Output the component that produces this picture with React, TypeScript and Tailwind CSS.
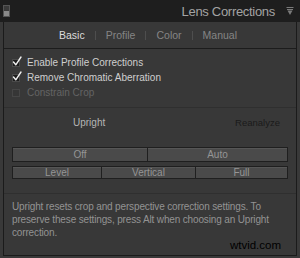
import React from "react";

function Check({ checked, disabled }: { checked?: boolean; disabled?: boolean }) {
  return (
    <div className="relative w-[8px] h-[8px] shrink-0">
      <div
        className={
          disabled
            ? "w-[8px] h-[8px] border border-[#464646] bg-[#363636]"
            : "w-[8px] h-[8px] border border-[#4a4a4a] bg-[#1c1c1c]"
        }
      />
      {checked && (
        <svg className="absolute left-[0px] top-[-3px]" width="10" height="10" viewBox="0 0 10 10">
          <path d="M1.5 6 L3.8 8.8 L9 1" fill="none" stroke="#f0f0f0" strokeWidth="1.4" strokeLinecap="round" strokeLinejoin="round" />
        </svg>
      )}
    </div>
  );
}

function Btn({ label, className }: { label: string; className?: string }) {
  return (
    <div
      className={
        "flex items-center justify-center border border-[#1f1f1f] bg-[#4a4a4a] text-[#959595] text-[10px] leading-none shadow-[inset_0_1px_0_#565656] " +
        (className ?? "")
      }
    >
      {label}
    </div>
  );
}

export default function App() {
  return (
    <div className="w-[300px] h-[258px] bg-[#393939] flex flex-col font-['Liberation_Sans',Arial,sans-serif] overflow-hidden">
      {/* Header */}
      <div className="h-[22px] bg-[#1e1e1e] flex items-center pl-[3px] pr-[6px] shrink-0">
        <div className="w-[7px] h-[12px] border border-[#555555] flex flex-col">
          <div className="flex-1 bg-[#3a3a3a]" />
          <div className="flex-1 bg-[#8a8a8a]" />
        </div>
        <div className="flex-1" />
        <span className="text-[13px] text-[#a3a3a3] tracking-[-0.3px] leading-none">Lens Corrections</span>
        <svg className="ml-[11px]" width="8" height="10" viewBox="0 0 8 10">
          <path d="M0.5 1.5 L7.5 1.5" stroke="#7a7a7a" strokeWidth="1" />
          <path d="M1 3.5 L7 3.5" stroke="#7a7a7a" strokeWidth="1" />
          <path d="M1.5 4.5 L4 9 L6.5 4.5 Z" fill="#7a7a7a" />
        </svg>
      </div>

      {/* Panel */}
      <div className="h-[234px] mx-[3px] border-x border-b border-[#1b1b1b] bg-[#383838] flex flex-col shrink-0">
        {/* Tabs */}
        <div className="h-[27px] border-b border-[#1c1c1c] flex items-center justify-center pr-[4px] text-[10.5px] leading-none">
          <span className="text-[#dcdcdc]">Basic</span>
          <span className="w-px h-[9px] bg-[#4e4e4e] mx-[10px]" />
          <span className="text-[#858585]">Profile</span>
          <span className="w-px h-[9px] bg-[#4e4e4e] mx-[10px]" />
          <span className="text-[#858585]">Color</span>
          <span className="w-px h-[9px] bg-[#4e4e4e] mx-[10px]" />
          <span className="text-[#858585]">Manual</span>
        </div>

        {/* Checkboxes */}
        <div className="h-[59px] border-b border-[#2f2f2f] pt-[6px] pl-[8px] flex flex-col">
          <div className="h-[15px] flex items-center gap-[7px]">
            <Check checked />
            <span className="text-[10px] text-[#cfcfcf] leading-none">Enable Profile Corrections</span>
          </div>
          <div className="h-[15px] flex items-center gap-[7px]">
            <Check checked />
            <span className="text-[10px] text-[#cfcfcf] leading-none">Remove Chromatic Aberration</span>
          </div>
          <div className="h-[15px] flex items-center gap-[7px]">
            <Check disabled />
            <span className="text-[10px] text-[#646464] leading-none">Constrain Crop</span>
          </div>
        </div>

        {/* Upright */}
        <div className="h-[86px] border-b border-[#2f2f2f] px-[8px] pt-[8px] flex flex-col">
          <div className="h-[14px] flex items-center">
            <span className="ml-[61px] text-[10px] text-[#b5b5b5] leading-none">Upright</span>
            <div className="flex-1" />
            <span className="mr-[8px] text-[9.5px] text-[#1a1a1a] leading-none">Reanalyze</span>
          </div>
          <div className="h-[17px]" />
          <div className="flex h-[15px]">
            <Btn label="Off" className="w-[136px]" />
            <Btn label="Auto" className="flex-1 border-l-0" />
          </div>
          <div className="h-[4px]" />
          <div className="flex h-[13px]">
            <Btn label="Level" className="w-[90px]" />
            <Btn label="Vertical" className="w-[94px] border-l-0" />
            <Btn label="Full" className="flex-1 border-l-0" />
          </div>
        </div>

        {/* Info text */}
        <div className="pt-[6px] pl-[8px] text-[10px] leading-[13px] text-[#939393] tracking-[-0.15px]">
          <div>Upright resets crop and perspective correction settings. To</div>
          <div>preserve these settings, press Alt when choosing an Upright</div>
          <div>correction.</div>
        </div>
        <div className="flex justify-end pr-[15px] mt-[1px]">
          <span className="text-[11.5px] text-black leading-none">wtvid.com</span>
        </div>
      </div>
    </div>
  );
}
